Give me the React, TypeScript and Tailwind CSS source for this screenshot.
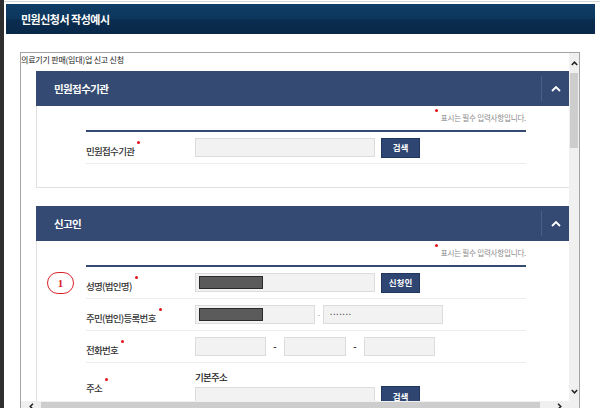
import type { ReactNode } from "react";

function Req() {
    return <i className="absolute -top-[3px] -right-[6px] w-[3px] h-[3px] rounded-full bg-[#e3101b]" />;
}

function Btn({ children }: { children: ReactNode }) {
    return (
        <div className="ml-[6px] w-[39px] h-[20px] bg-[#2f4673] border border-[#22375e] text-white text-[8.5px] font-bold flex items-center justify-center">
            {children}
        </div>
    );
}

function Row({ label, children }: { label: string; children: ReactNode }) {
    return (
        <div className="relative flex items-center h-[32px] border-b border-[#ececec]">
            <div className="w-[109px] shrink-0">
                <span className="relative text-[9.5px] leading-[14px] font-medium tracking-[-0.7px] text-[#333]">
                    {label}
                    <Req />
                </span>
            </div>
            <div className="flex items-center">{children}</div>
        </div>
    );
}

function Redacted() {
    return <div className="w-[64px] h-[13px] bg-[#5b5b5b] border border-[#2b2b2b]" />;
}

function Section({ title, children }: { title: string; children: ReactNode }) {
    return (
        <div className="ml-[15px]">
            <div className="h-[35px] bg-[#344a72] flex items-center">
                <span className="flex-1 pl-[18px] text-white font-bold text-[10.5px] tracking-[-0.6px]">{title}</span>
                <div className="w-[28px] h-[25px] border-l border-[#4a5e86] flex items-center justify-center">
                    <svg width="10" height="6" viewBox="0 0 10 6">
                        <polyline points="1,5 5,1 9,5" fill="none" stroke="white" strokeWidth="1.8" />
                    </svg>
                </div>
            </div>
            <div className="border-l border-b border-[#e0e0e0] pl-[49px] pr-[43px] pb-[23px]">
                <div className="h-[24px] flex items-center justify-end text-[7.5px] text-[#8a8a8a] tracking-[-0.2px]">
                    <span className="relative">
                        <i className="absolute -left-[6px] -top-[3px] w-[3px] h-[3px] rounded-full bg-[#e3101b]" />
                        표시는 필수 입력사항입니다.
                    </span>
                </div>
                <div className="border-t-2 border-[#344a72]">{children}</div>
            </div>
        </div>
    );
}

export default function App() {
    return (
        <div className="w-[600px] h-[408px] overflow-hidden bg-white flex font-['Noto_Sans_CJK_KR',sans-serif]">
            {/* window edge */}
            <div className="w-[4px] shrink-0 bg-[#2e2e2e]" />

            <div className="flex-1 flex flex-col">
                <div className="h-[1px] mt-[1px] shrink-0 bg-[#d6d6d6]" />
                <div className="h-[2px] shrink-0" />

                {/* Page header */}
                <div className="ml-[2px] w-[589px] h-[30px] shrink-0 bg-[linear-gradient(#0f3d66_0%,#0c365c_50%,#0a2c4e_52%,#09294a_100%)] flex items-center pl-[15px]">
                    <span className="text-white font-bold text-[11px] tracking-[-0.5px]">민원신청서 작성예시</span>
                </div>

                {/* Embedded form frame */}
                <div className="ml-[16px] mt-[18px] w-[560px] h-[372px] shrink-0 border border-[#a3a3a3] flex flex-col">
                    <div className="h-[348px] shrink-0 flex">
                        <div className="w-[548px] overflow-hidden">
                            <div className="h-[18px] text-[8px] leading-[10px] pt-[2px] text-[#222] tracking-[-0.2px]">
                                의료기기 판매(임대)업 신고 신청
                            </div>

                            <Section title="민원접수기관">
                                <Row label="민원접수기관">
                                    <div className="w-[180px] h-[19px] bg-[#f2f2f2] border border-[#dcdcdc]" />
                                    <Btn>검색</Btn>
                                </Row>
                            </Section>

                            <div className="h-[18px]" />

                            <Section title="신고인">
                                <Row label="성명(법인명)">
                                    <div className="absolute left-[-39px] top-[5px] w-[27px] h-[22px] rounded-full border-[1.5px] border-[#d9232a] flex items-center justify-center text-[#d9232a] text-[11px] font-bold font-['Liberation_Serif',serif]">
                                        1
                                    </div>
                                    <div className="w-[180px] h-[19px] bg-[#f2f2f2] border border-[#dcdcdc] flex items-center pl-[3px]">
                                        <Redacted />
                                    </div>
                                    <Btn>신청인</Btn>
                                </Row>
                                <Row label="주민(법인)등록번호">
                                    <div className="w-[120px] h-[19px] bg-[#f2f2f2] border border-[#dcdcdc] flex items-center pl-[3px]">
                                        <Redacted />
                                    </div>
                                    <span className="w-[8px] text-center text-[7px] text-[#888]">-</span>
                                    <div className="w-[120px] h-[19px] bg-[#f2f2f2] border border-[#dcdcdc] flex items-center pl-[5px] text-[7px] font-bold text-[#333] tracking-[-1px]">
                                        ·······
                                    </div>
                                </Row>
                                <Row label="전화번호">
                                    <div className="w-[71px] h-[19px] bg-[#f2f2f2] border border-[#dcdcdc]" />
                                    <span className="w-[18px] text-center text-[9px] font-bold text-[#333]">-</span>
                                    <div className="w-[62px] h-[19px] bg-[#f2f2f2] border border-[#dcdcdc]" />
                                    <span className="w-[18px] text-center text-[9px] font-bold text-[#333]">-</span>
                                    <div className="w-[71px] h-[19px] bg-[#f2f2f2] border border-[#dcdcdc]" />
                                </Row>
                                <div className="flex items-start">
                                    <div className="w-[109px] shrink-0 pt-[10px]">
                                        <span className="relative text-[9.5px] leading-[14px] font-medium tracking-[-0.7px] text-[#333]">
                                            주소
                                            <Req />
                                        </span>
                                    </div>
                                    <div className="flex flex-col pt-[8px]">
                                        <span className="text-[9.5px] leading-[12px] font-medium tracking-[-0.7px] text-[#222]">기본주소</span>
                                        <div className="flex items-center mt-[3px]">
                                            <div className="w-[180px] h-[19px] bg-[#f2f2f2] border border-[#dcdcdc]" />
                                            <Btn>검색</Btn>
                                        </div>
                                    </div>
                                </div>
                            </Section>
                        </div>

                        {/* vertical scrollbar */}
                        <div className="w-[10px] bg-[#f0f0f0] flex flex-col">
                            <div className="h-[20px] flex items-center justify-center">
                                <svg width="7" height="5" viewBox="0 0 7 5">
                                    <polyline points="0.8,4 3.5,1.2 6.2,4" fill="none" stroke="#222" strokeWidth="1.5" />
                                </svg>
                            </div>
                            <div className="h-[75px] mx-[1px] bg-[#cdcdcd]" />
                            <div className="flex-1" />
                            <div className="h-[20px] flex items-center justify-center">
                                <svg width="7" height="5" viewBox="0 0 7 5">
                                    <polyline points="0.8,1 3.5,3.8 6.2,1" fill="none" stroke="#222" strokeWidth="1.5" />
                                </svg>
                            </div>
                        </div>
                    </div>

                    {/* horizontal scrollbar */}
                    <div className="h-[10px] shrink-0 flex bg-[#f0f0f0]">
                        <div className="w-[20px] flex items-center justify-center">
                            <svg width="5" height="7" viewBox="0 0 5 7">
                                <polyline points="4,0.8 1.2,3.5 4,6.2" fill="none" stroke="#222" strokeWidth="1.5" />
                            </svg>
                        </div>
                        <div className="w-[499px] my-[1px] bg-[#cdcdcd]" />
                        <div className="flex-1" />
                        <div className="w-[20px] flex items-center justify-center">
                            <svg width="5" height="7" viewBox="0 0 5 7">
                                <polyline points="1,0.8 3.8,3.5 1,6.2" fill="none" stroke="#222" strokeWidth="1.5" />
                            </svg>
                        </div>
                        <div className="w-[10px] bg-[#f0f0f0]" />
                    </div>
                </div>
            </div>
        </div>
    );
}
